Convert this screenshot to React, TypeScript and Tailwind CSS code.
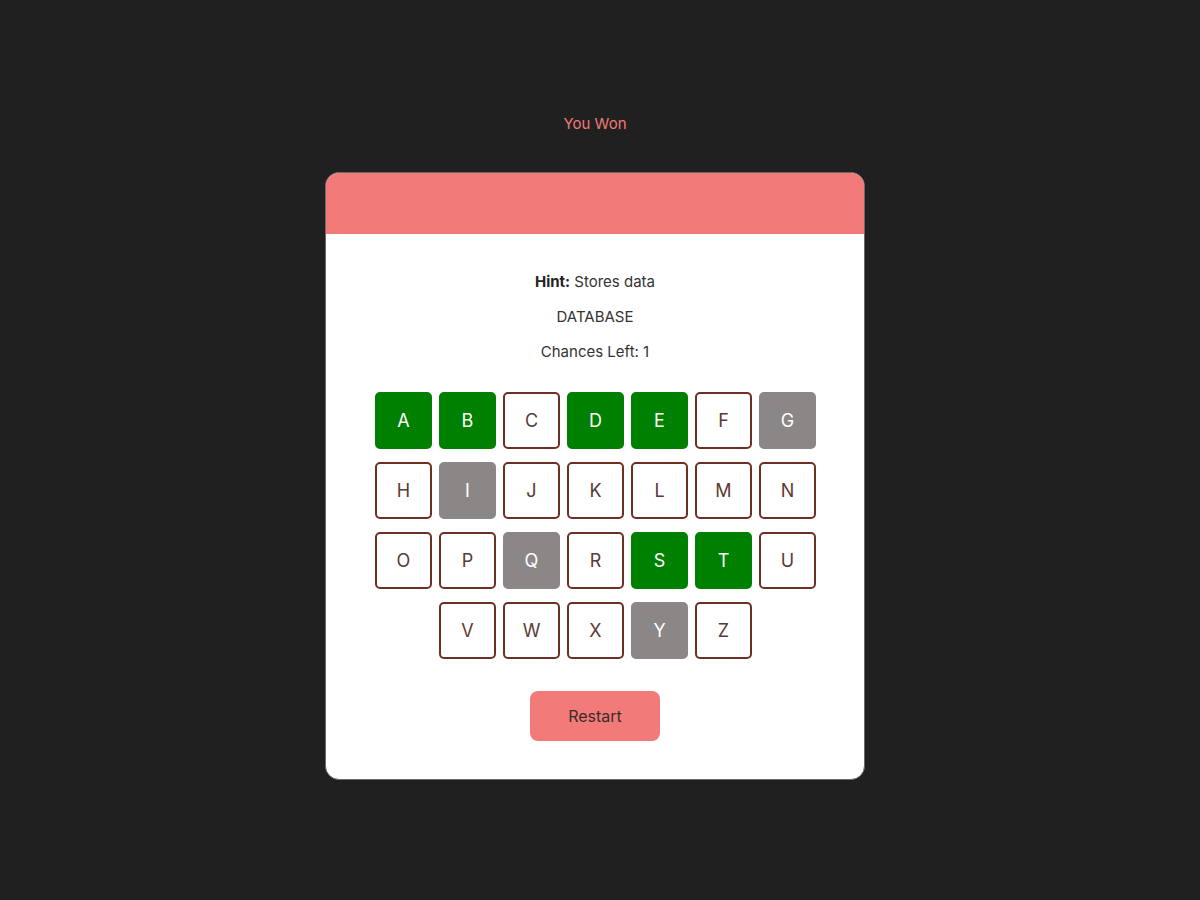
import React from "react";

const rows = [
  ["A", "B", "C", "D", "E", "F", "G"],
  ["H", "I", "J", "K", "L", "M", "N"],
  ["O", "P", "Q", "R", "S", "T", "U"],
  ["V", "W", "X", "Y", "Z"],
];

const correct = ["A", "B", "D", "E", "S", "T"];
const wrong = ["G", "I", "Q", "Y"];

function Tile({ letter }: { letter: string }) {
  let cls = "bg-white border-2 border-[#6e2f24] text-[#5a3b33]";
  if (correct.includes(letter)) cls = "bg-[#008000] border-2 border-[#008000] text-white";
  if (wrong.includes(letter)) cls = "bg-[#8b8786] border-2 border-[#8b8786] text-white";
  return (
    <button className={`w-[57px] h-[57px] rounded-[5px] flex items-center justify-center text-[18px] ${cls}`}>
      {letter}
    </button>
  );
}

export default function App() {
  return (
    <main
      className="min-h-[900px] bg-[#202020] flex flex-col items-center pt-[113px]"
      style={{ fontFamily: "Inter, 'Noto Sans', sans-serif" }}
    >
      <p className="text-[#f07a77] text-[15px] leading-[22px] ml-[-10px]">You Won</p>

      <div className="mt-[37px] w-[540px] bg-white rounded-[14px] overflow-hidden border border-[#6a6a6a] flex flex-col items-center ml-[-10px]">
        <div className="w-full h-[61px] bg-[#f27a79]" />

        <div className="pt-[36px] flex flex-col items-center gap-[11px] text-[15px] leading-[24px] text-[#333]">
          <p>
            <span className="font-bold text-[#222]">Hint:</span> Stores data
          </p>
          <p>DATABASE</p>
          <p>Chances Left: 1</p>
        </div>

        <div className="mt-[28px] flex flex-col items-center gap-[13px] ml-[1px]">
          {rows.map((row, i) => (
            <div key={i} className="flex gap-[7px]">
              {row.map((l) => (
                <Tile key={l} letter={l} />
              ))}
            </div>
          ))}
        </div>

        <button className="mt-[32px] mb-[38px] w-[130px] h-[50px] rounded-[8px] bg-[#f27a79] text-[#3a2b2b] text-[16px]">
          Restart
        </button>
      </div>
    </main>
  );
}
